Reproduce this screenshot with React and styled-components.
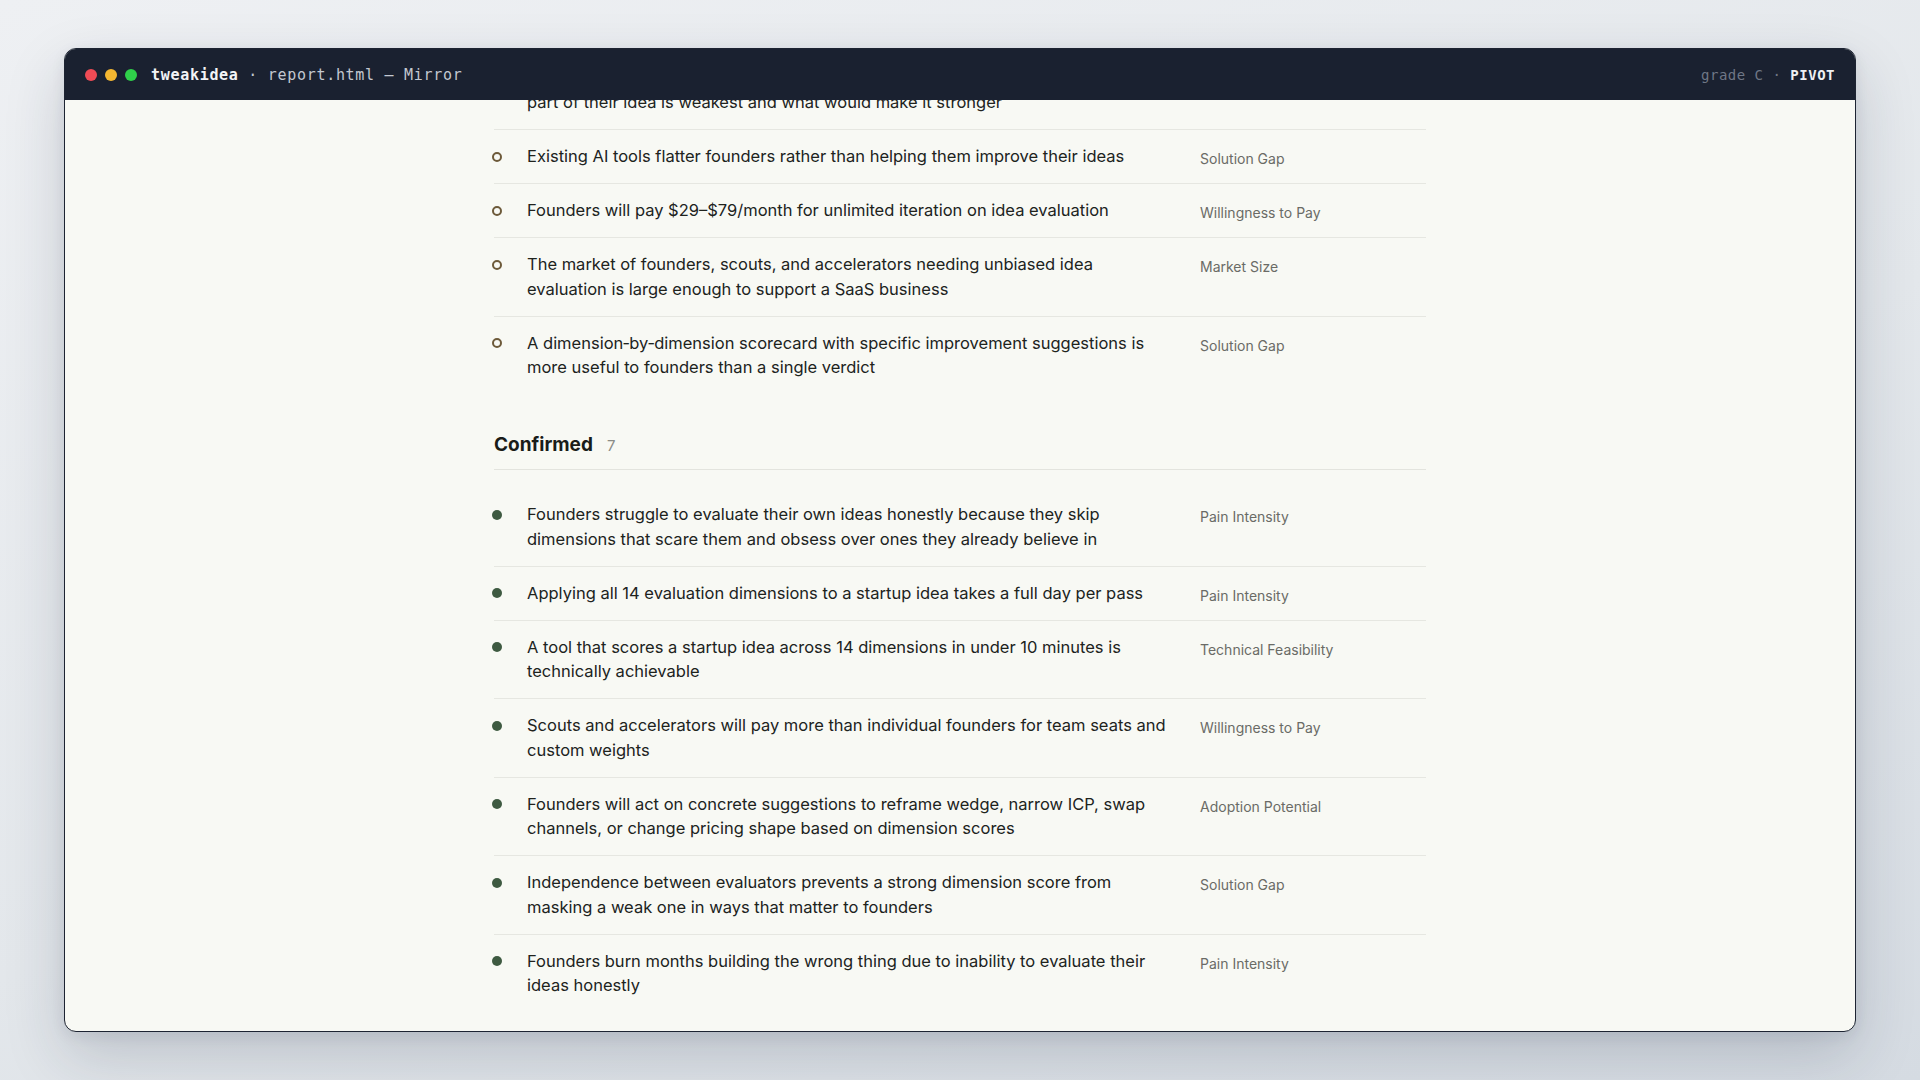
import React, { useLayoutEffect, useRef } from 'react';
import styled, { createGlobalStyle } from 'styled-components';

// css
const GlobalStyle = createGlobalStyle`
  html, body {
    margin: 0;
    height: 100%;
  }
  body {
    background: linear-gradient(160deg, #eef0f3 0%, #e3e7eb 55%, #d5dbe2 100%);
    font-family: Inter, "Noto Sans", sans-serif;
    -webkit-font-smoothing: antialiased;
  }
  #root {
    height: 100%;
  }
`;

const PageStyled = styled.div`
  height: 100vh;
  box-sizing: border-box;
  padding: 48px 64px;
  display: flex;
`;

const WindowStyled = styled.div`
  flex: 1;
  display: flex;
  flex-direction: column;
  min-height: 0;
  border: 1px solid #1d2432;
  border-radius: 12px;
  overflow: hidden;
  background: #f8f9f4;
  box-shadow: 0 24px 60px rgba(30, 40, 60, 0.18), 0 4px 14px rgba(30, 40, 60, 0.08);
`;

const TitleBarStyled = styled.div`
  flex: 0 0 51px;
  display: flex;
  align-items: center;
  padding: 0 20px;
  background: #1a2130;
  font-family: "DejaVu Sans Mono", "Liberation Mono", monospace;

  .titlebar {
    &__dots {
      display: flex;
      gap: 8px;
      margin-right: 14px;
    }

    &__name {
      font-size: 15px;
      letter-spacing: 0.7px;
      color: #c3c8d1;
      white-space: pre;
    }

    &__app {
      color: #f3f4f6;
      font-weight: bold;
    }

    &__meta {
      margin-left: auto;
      font-size: 14px;
      letter-spacing: 0.5px;
      color: #6f7786;
      white-space: pre;
    }

    &__verdict {
      color: #eef0f3;
      font-weight: bold;
    }
  }
`;

const Dot = styled.span`
  width: 12px;
  height: 12px;
  border-radius: 50%;
  background: ${(p) => p.color};
`;

const ScrollStyled = styled.div`
  flex: 1;
  min-height: 0;
  overflow-y: auto;
  scrollbar-width: none;

  &::-webkit-scrollbar {
    display: none;
  }
`;

const ColumnStyled = styled.div`
  max-width: 932px;
  margin: 0 auto;
  padding: 56px 0 140px;
`;

const SectionStyled = styled.section`
  & + & {
    margin-top: 39px;
  }
`;

const SectionHeadStyled = styled.div`
  display: flex;
  align-items: baseline;
  gap: 14px;
  padding-bottom: 12px;
  margin-bottom: 18px;
  border-bottom: 1px solid #e3e4de;

  .section {
    &__title {
      margin: 0;
      font-size: 19px;
      line-height: 24px;
      font-weight: 700;
      color: #1a1c19;
    }

    &__count {
      font-size: 15px;
      color: #8b8c86;
    }
  }
`;

const RowStyled = styled.div`
  display: grid;
  grid-template-columns: 33px 1fr 226px;
  padding: 14px 0;
  border-bottom: 1px solid #e6e7e1;

  &:last-child {
    border-bottom: none;
  }
`;

const Bullet = styled.span`
  width: 10px;
  height: 10px;
  margin: 7.5px 0 0 -2px;
  box-sizing: border-box;
  border-radius: 50%;
  border: ${(p) => (p.$filled ? 'none' : '2px solid #6d5a3a')};
  background: ${(p) => (p.$filled ? '#3e5a41' : 'transparent')};
`;

const ClaimText = styled.p`
  margin: 0;
  padding-right: 24px;
  font-size: 16.5px;
  line-height: 24.75px;
  color: #20231d;
  white-space: pre-line;
`;

const Tag = styled.span`
  padding-top: 5px;
  font-size: 14px;
  line-height: 20px;
  color: #6a6b66;
`;

const untested = [
  {
    text: 'Founders iterate faster when feedback arrives within minutes instead of after weeks of customer calls',
    tag: 'Adoption Potential',
  },
  {
    text: 'Founders want a blunt, structured read that shows them exactly which\npart of their idea is weakest and what would make it stronger',
    tag: 'Pain Intensity',
  },
  {
    text: 'Existing AI tools flatter founders rather than helping them improve their ideas',
    tag: 'Solution Gap',
    anchor: true,
  },
  {
    text: 'Founders will pay $29–$79/month for unlimited iteration on idea evaluation',
    tag: 'Willingness to Pay',
  },
  {
    text: 'The market of founders, scouts, and accelerators needing unbiased idea evaluation is large enough to support a SaaS business',
    tag: 'Market Size',
  },
  {
    text: 'A dimension‑by‑dimension scorecard with specific improvement suggestions is more useful to founders than a single verdict',
    tag: 'Solution Gap',
  },
];

const confirmed = [
  {
    text: 'Founders struggle to evaluate their own ideas honestly because they skip dimensions that scare them and obsess over ones they already believe in',
    tag: 'Pain Intensity',
  },
  {
    text: 'Applying all 14 evaluation dimensions to a startup idea takes a full day per pass',
    tag: 'Pain Intensity',
  },
  {
    text: 'A tool that scores a startup idea across 14 dimensions in under 10 minutes is technically achievable',
    tag: 'Technical Feasibility',
  },
  {
    text: 'Scouts and accelerators will pay more than individual founders for team seats and custom weights',
    tag: 'Willingness to Pay',
  },
  {
    text: 'Founders will act on concrete suggestions to reframe wedge, narrow ICP, swap channels, or change pricing shape based on dimension scores',
    tag: 'Adoption Potential',
  },
  {
    text: 'Independence between evaluators prevents a strong dimension score from masking a weak one in ways that matter to founders',
    tag: 'Solution Gap',
  },
  {
    text: 'Founders burn months building the wrong thing due to inability to evaluate their ideas honestly',
    tag: 'Pain Intensity',
  },
];

const sections = [
  { title: 'Untested', items: untested, filled: false },
  { title: 'Confirmed', items: confirmed, filled: true },
];

// how far below the title bar the "Existing AI tools" row starts
const ANCHOR_OFFSET = 30;

const App = () => {
  const scrollRef = useRef(null);
  const anchorRef = useRef(null);

  useLayoutEffect(() => {
    const box = scrollRef.current;
    const row = anchorRef.current;
    if (!box || !row) return;
    box.scrollTop +=
      row.getBoundingClientRect().top -
      box.getBoundingClientRect().top -
      ANCHOR_OFFSET;
  }, []);

  return (
    <>
      <GlobalStyle />
      <PageStyled>
        <WindowStyled>
          <TitleBarStyled>
            <div className="titlebar__dots">
              <Dot color="#ef4b55" />
              <Dot color="#f4b731" />
              <Dot color="#2fd04a" />
            </div>
            <span className="titlebar__name">
              <span className="titlebar__app">tweakidea</span>
              {' · report.html — Mirror'}
            </span>
            <span className="titlebar__meta">
              {'grade C · '}
              <span className="titlebar__verdict">PIVOT</span>
            </span>
          </TitleBarStyled>
          <ScrollStyled ref={scrollRef}>
            <ColumnStyled>
              {sections.map((section) => (
                <SectionStyled key={section.title}>
                  <SectionHeadStyled>
                    <h2 className="section__title">{section.title}</h2>
                    <span className="section__count">
                      {section.items.length}
                    </span>
                  </SectionHeadStyled>
                  {section.items.map((item) => (
                    <RowStyled
                      key={item.text}
                      ref={item.anchor ? anchorRef : undefined}
                    >
                      <Bullet $filled={section.filled} />
                      <ClaimText>{item.text}</ClaimText>
                      <Tag>{item.tag}</Tag>
                    </RowStyled>
                  ))}
                </SectionStyled>
              ))}
            </ColumnStyled>
          </ScrollStyled>
        </WindowStyled>
      </PageStyled>
    </>
  );
};

export default App;
